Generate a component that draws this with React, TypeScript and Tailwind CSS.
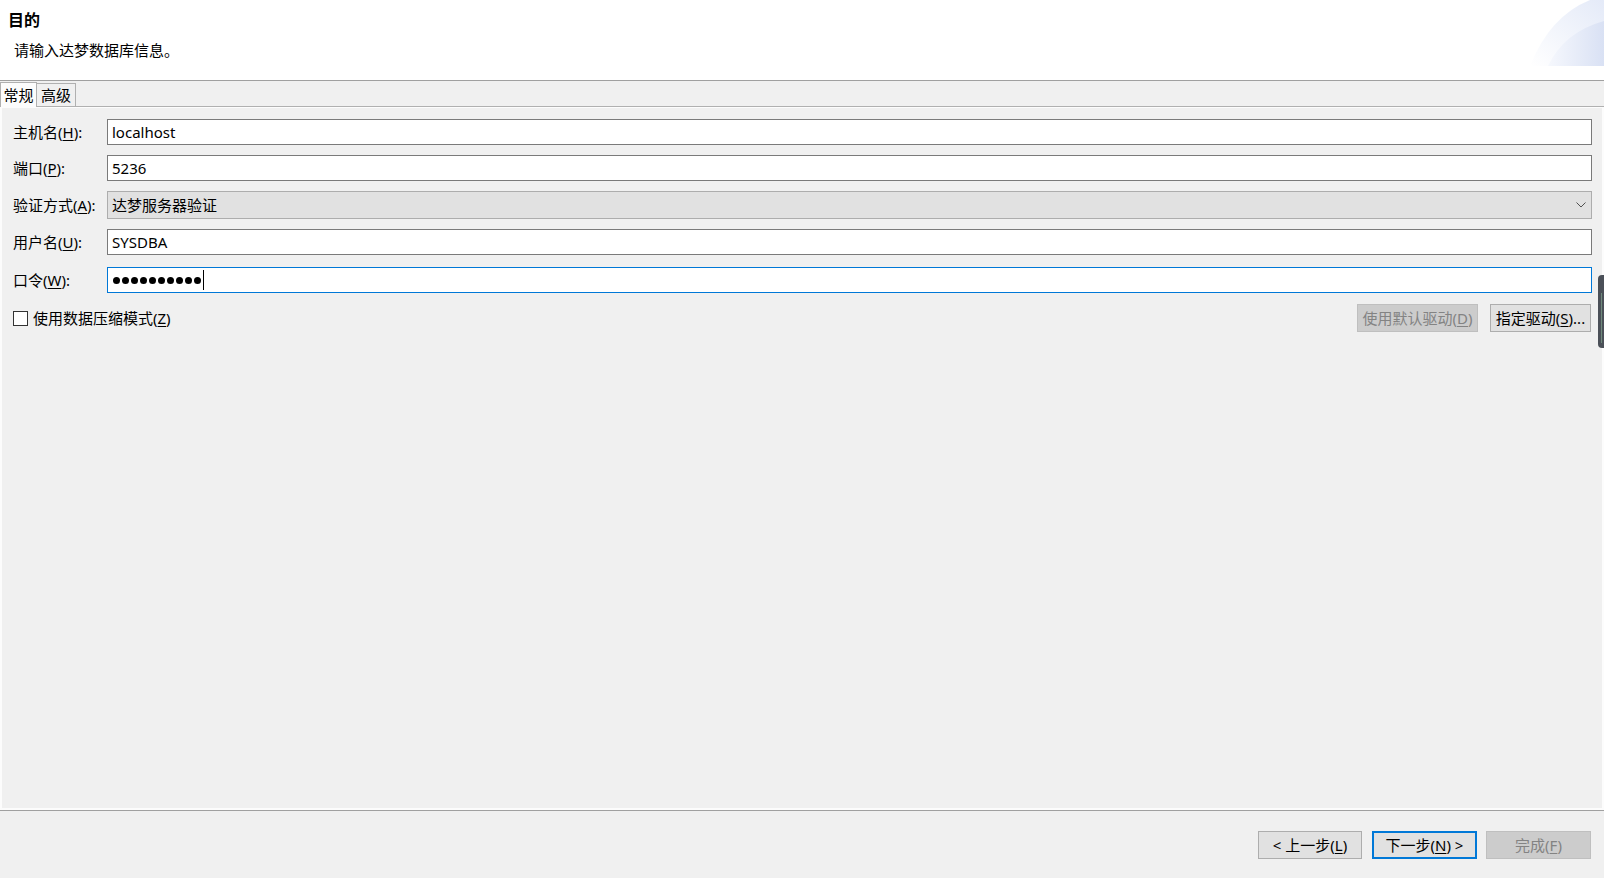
import React from "react";

function U({ c }: { c: string }) {
  return <span className="underline underline-offset-[2px] decoration-[1px]">{c}</span>;
}

function Label({ children }: { children: React.ReactNode }) {
  return <div className="w-[94px] shrink-0 leading-[20px] whitespace-nowrap">{children}</div>;
}

function Chevron() {
  return (
    <svg width="10" height="6" viewBox="0 0 10 6" className="block">
      <path d="M0.5 0.5 L5 5 L9.5 0.5" fill="none" stroke="#505050" strokeWidth="1" />
    </svg>
  );
}

function HeaderArt() {
  return (
    <svg width="76" height="67" viewBox="0 0 76 67" className="absolute right-0 top-0">
      <defs>
        <linearGradient id="g1" x1="0" y1="1" x2="1" y2="0">
          <stop offset="0" stopColor="#ffffff" />
          <stop offset="1" stopColor="#e4eaf8" />
        </linearGradient>
        <linearGradient id="g2" x1="0" y1="0" x2="1" y2="0">
          <stop offset="0" stopColor="#f6f8fd" />
          <stop offset="1" stopColor="#d9e1f4" />
        </linearGradient>
      </defs>
      <path d="M2 66 Q22 16 62 0 L76 0 L76 66 Z" fill="url(#g1)" />
      <path d="M20 66 Q36 32 76 21 L76 66 Z" fill="url(#g2)" />
    </svg>
  );
}

export default function App() {
  return (
    <div className="w-[1604px] h-[878px] bg-white overflow-hidden relative text-black text-[15px] font-['Noto_Sans','Noto_Sans_CJK_SC',sans-serif]">
      {/* header */}
      <div className="h-[81px] bg-white border-b border-[#a0a0a0] relative">
        <div className="pl-[8px] pt-[9px] text-[16px] font-bold leading-[22px]">目的</div>
        <div className="pl-[14px] pt-[9px] leading-[20px]">请输入达梦数据库信息。</div>
        <HeaderArt />
      </div>

      {/* tab row */}
      <div className="h-[26px] bg-[#f0f0f0] flex items-end">
        <div className="h-[25px] w-[37px] bg-[#fcfcfc] border-l border-t border-r border-[#b0b0b0] flex items-center justify-center leading-[20px]">
          常规
        </div>
        <div className="h-[24px] w-[39px] border-t border-r border-b border-[#b0b0b0] flex items-center justify-center leading-[20px]">
          高级
        </div>
        <div className="flex-1 h-full border-b border-[#b0b0b0]" />
      </div>

      {/* content */}
      <div className="h-[703px] bg-[#fcfcfc] px-[2px] pt-[1px] pb-[2px]">
        <div className="h-full bg-[#f0f0f0] pl-[11px] pr-[10px] pt-[11px]">
          <div className="flex items-center h-[26px]">
            <Label>
              主机名(<U c="H" />):
            </Label>
            <div className="flex-1 h-full bg-white border border-[#7a7a7a] flex items-center pl-[4px] leading-[20px]">localhost</div>
          </div>
          <div className="flex items-center h-[26px] mt-[10px]">
            <Label>
              端口(<U c="P" />):
            </Label>
            <div className="flex-1 h-full bg-white border border-[#7a7a7a] flex items-center pl-[4px] leading-[20px]">5236</div>
          </div>
          <div className="flex items-center h-[28px] mt-[10px]">
            <Label>
              验证方式(<U c="A" />):
            </Label>
            <div className="flex-1 h-full bg-[#e1e1e1] border border-[#adadad] flex items-center pl-[4px] pr-[5px] leading-[20px]">
              <span className="flex-1">达梦服务器验证</span>
              <Chevron />
            </div>
          </div>
          <div className="flex items-center h-[26px] mt-[10px]">
            <Label>
              用户名(<U c="U" />):
            </Label>
            <div className="flex-1 h-full bg-white border border-[#7a7a7a] flex items-center pl-[4px] leading-[20px]">SYSDBA</div>
          </div>
          <div className="flex items-center h-[26px] mt-[12px]">
            <Label>
              口令(<U c="W" />):
            </Label>
            <div className="flex-1 h-full bg-white border border-[#0078d7] flex items-center pl-[5px]">
              <div className="flex gap-[2px]">
                {Array.from({ length: 10 }).map((_, i) => (
                  <span key={i} className="block w-[7px] h-[7px] rounded-full bg-black" />
                ))}
              </div>
              <span className="block w-[1px] h-[20px] bg-black ml-[2px]" />
            </div>
          </div>
          <div className="flex items-center h-[28px] mt-[11px] pr-[1px]">
            <div className="w-[15px] h-[15px] border border-[#333333] bg-white" />
            <div className="ml-[5px] leading-[20px] flex-1">
              使用数据压缩模式(<U c="Z" />)
            </div>
            <div className="w-[121px] h-[28px] bg-[#cccccc] border border-[#bfbfbf] text-[#838383] flex items-center justify-center leading-[20px]">
              使用默认驱动(<U c="D" />)
            </div>
            <div className="w-[101px] h-[28px] ml-[12px] bg-[#e1e1e1] border border-[#adadad] flex items-center justify-center leading-[20px]">
              指定驱动(<U c="S" />)...
            </div>
          </div>
        </div>
      </div>

      {/* footer */}
      <div className="h-[68px] bg-[#f0f0f0] border-t border-[#a0a0a0] flex justify-end pt-[20px] pr-[13px]">
        <div className="w-[104px] h-[28px] bg-[#e1e1e1] border border-[#adadad] flex items-center justify-center leading-[20px]">
          &lt; 上一步(<U c="L" />)
        </div>
        <div className="w-[105px] h-[28px] ml-[10px] bg-[#e1e1e1] border-2 border-[#0078d7] flex items-center justify-center leading-[20px]">
          下一步(<U c="N" />) &gt;
        </div>
        <div className="w-[105px] h-[28px] ml-[9px] bg-[#cccccc] border border-[#bfbfbf] text-[#838383] flex items-center justify-center leading-[20px]">
          完成(<U c="F" />)
        </div>
      </div>

      {/* overlay handle at right edge */}
      <div className="absolute right-0 top-[275px] w-[6px] h-[73px] bg-[#4b5058] rounded-l-[4px]">
        <div className="absolute left-[3px] top-[18px] w-[1px] h-[50px] bg-[#6f8a7c]" />
      </div>
    </div>
  );
}
